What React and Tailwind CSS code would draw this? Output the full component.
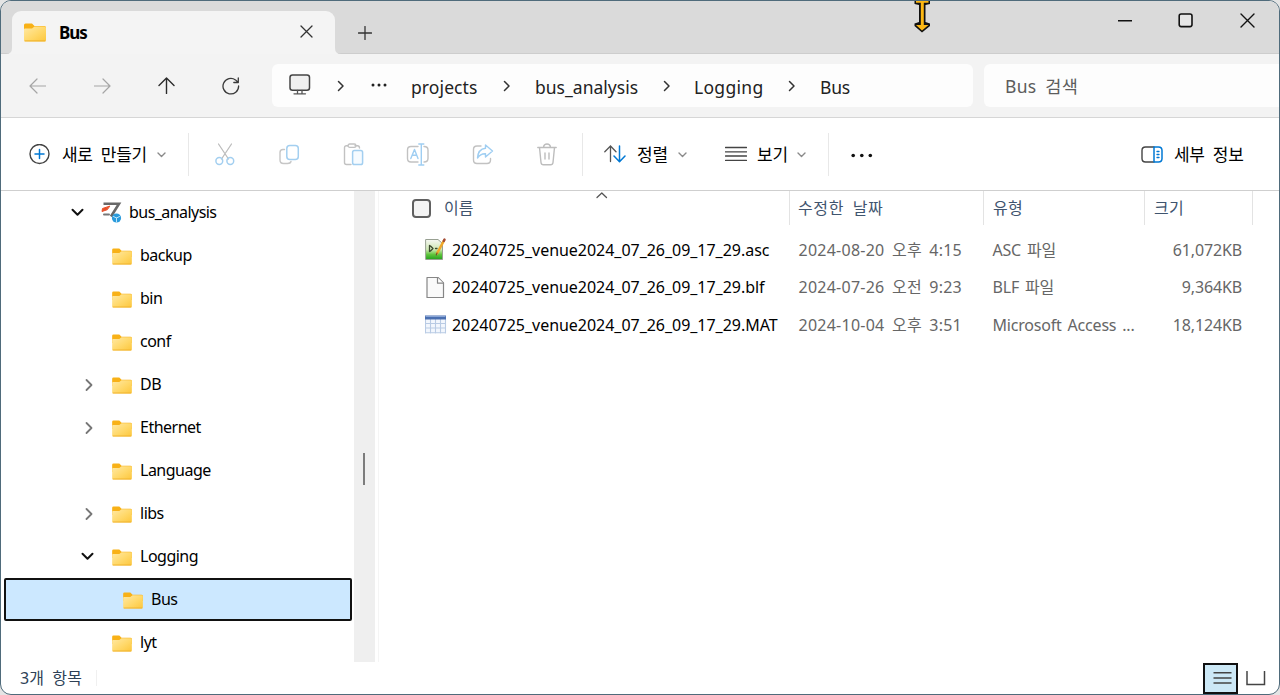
import React from 'react';
import clsx from 'clsx';

const treeItems = [
  { name: 'backup', level: 1 },
  { name: 'bin', level: 1 },
  { name: 'conf', level: 1 },
  { name: 'DB', level: 1, state: 'closed' },
  { name: 'Ethernet', level: 1, state: 'closed' },
  { name: 'Language', level: 1 },
  { name: 'libs', level: 1, state: 'closed' },
  { name: 'Logging', level: 1, state: 'open' },
  { name: 'Bus', level: 2, selected: true },
  { name: 'lyt', level: 1 },
];

const files = [
  { icon: 'asc', name: '20240725_venue2024_07_26_09_17_29.asc', date: '2024-08-20 오후 4:15', type: 'ASC 파일', size: '61,072KB' },
  { icon: 'blf', name: '20240725_venue2024_07_26_09_17_29.blf', date: '2024-07-26 오전 9:23', type: 'BLF 파일', size: '9,364KB' },
  { icon: 'mat', name: '20240725_venue2024_07_26_09_17_29.MAT', date: '2024-10-04 오후 3:51', type: 'Microsoft Access ...', size: '18,124KB' },
];

const Svg = ({ w, h, className, children }) => (
  <svg
    width={w}
    height={h}
    viewBox={`0 0 ${w} ${h}`}
    fill="none"
    strokeLinecap="round"
    strokeLinejoin="round"
    className={clsx('shrink-0', className)}
  >
    {children}
  </svg>
);

const FolderIcon = ({ className }) => (
  <svg viewBox="0 0 22 19" className={clsx('shrink-0', className)}>
    <defs>
      <linearGradient id="folderFront" x1="0" y1="0" x2="1" y2="1">
        <stop offset="0" stopColor="#ffe9a6" />
        <stop offset="0.55" stopColor="#ffd869" />
        <stop offset="1" stopColor="#fcc63c" />
      </linearGradient>
    </defs>
    <path d="M0 2Q0 0.5 1.5 0.5H8L10.5 3H20.5Q22 3 22 4.5V10H0Z" fill="#f8b117" />
    <path d="M0 6.5Q0 5.5 1 5.5H8L10.5 3.5H20.5Q22 3.5 22 5V17Q22 18.5 20.5 18.5H1.5Q0 18.5 0 17Z" fill="url(#folderFront)" />
    <path d="M0.6 17.9H21.4" stroke="#efb02a" strokeWidth="1" />
  </svg>
);

const Chevron = ({ className }) => (
  <Svg w={8} h={12} className={className}>
    <path d="M1.5 1.5L6 6L1.5 10.5" stroke="#333" strokeWidth="1.5" />
  </Svg>
);

const SmallDown = ({ className }) => (
  <Svg w={9} h={6} className={className}>
    <path d="M1 1L4.5 4.5L8 1" stroke="#8a8a8a" strokeWidth="1.4" />
  </Svg>
);

const TitleBar = () => (
  <div className="relative flex h-[53px] shrink-0 border-b border-[#cdcdcd] bg-[#dadada] pl-[11px]">
    <div className="relative z-10 mt-2.5 flex h-[43px] w-[323px] items-center rounded-t-[9px] bg-[#f4f4f4] pl-3">
      <Svg w={6} h={6} className="absolute -left-1.5 bottom-0">
        <path d="M6 0V6H0Q6 6 6 0Z" fill="#f4f4f4" />
      </Svg>
      <Svg w={6} h={6} className="absolute -right-1.5 bottom-0">
        <path d="M0 0V6H6Q0 6 0 0Z" fill="#f4f4f4" />
      </Svg>
      <FolderIcon className="-mt-px h-[19px] w-[22px]" />
      <span className="ml-[13px] text-[17px] font-bold tracking-[-1px] text-black">Bus</span>
      <Svg w={13} h={13} className="mr-[22px] -mt-0.5 ml-auto">
        <path d="M1 1L12 12M12 1L1 12" stroke="#333" strokeWidth="1.3" />
      </Svg>
    </div>
    <Svg w={14} h={14} className="mt-[25px] ml-[23px]">
      <path d="M7 0.5V13.5M0.5 7H13.5" stroke="#333" strokeWidth="1.3" />
    </Svg>
    <div className="mt-3 mr-[24px] ml-auto flex items-start">
      <Svg w={14} h={15}>
        <path d="M0.5 7.7H13.5" stroke="#111" strokeWidth="1.6" />
      </Svg>
      <Svg w={15} h={15} className="ml-[46px]">
        <rect x="1.2" y="1" width="12.8" height="12.6" rx="2" fill="#e6e6e6" stroke="#111" strokeWidth="1.6" />
      </Svg>
      <Svg w={15} h={15} className="ml-[47px]">
        <path d="M1 1L14 14M14 1L1 14" stroke="#111" strokeWidth="1.4" />
      </Svg>
    </div>
    <Svg w={18} h={34} className="absolute -top-px left-[912px]">
      <path d="M1.5 0V4L6 5V22L1.5 23.5V26L9 32.5L17 26V23.5L12.5 22V5L17 4V0Z" fill="#111" />
      <path d="M3 0V2.8H7.8V25H3L9 30.5L15.5 25H10.8V2.8H15.5V0Z" fill="#fdb813" />
    </Svg>
  </div>
);

const Crumb = ({ children, className }) => (
  <span className={clsx('pt-[3px] text-[17.5px] text-[#222]', className)}>{children}</span>
);

const AddressBar = () => (
  <div className="flex h-[64px] shrink-0 items-center border-b border-[#d6d6d6] bg-[#f3f3f3]">
    <Svg w={17} h={16} className="ml-7">
      <path d="M16.5 8H1M8 1L1 8L8 15" stroke="#a5a5a5" strokeWidth="1.2" />
    </Svg>
    <Svg w={17} h={16} className="ml-[48px]">
      <path d="M0.5 8H16M9 1L16 8L9 15" stroke="#a5a5a5" strokeWidth="1.2" />
    </Svg>
    <Svg w={17} h={17} className="ml-[47px]">
      <path d="M8.5 16.5V1M1 8.5L8.5 1L16 8.5" stroke="#2b2b2b" strokeWidth="1.4" />
    </Svg>
    <Svg w={18} h={18} className="ml-[47px]">
      <path d="M16.6 9A7.8 7.8 0 1 1 13.5 2.9L16 5.3M16.3 1V5.5H11.8" stroke="#3a3a3a" strokeWidth="1.3" />
    </Svg>
    <div className="ml-[32px] flex h-[43px] w-[701px] items-center rounded-[6px] bg-[#fdfdfd]">
      <Svg w={22} h={21} className="ml-[17px] -mt-0.5">
        <rect x="1" y="1" width="19.5" height="15.2" rx="2.5" fill="#f0f0f0" stroke="#444" strokeWidth="1.5" />
        <path d="M8.5 16.5V19M13 16.5V19M5 19.8H16.5" stroke="#555" strokeWidth="1.3" />
      </Svg>
      <Chevron className="ml-[26px]" />
      <Svg w={17} h={4} className="ml-[26px] -mt-0.5">
        <circle cx="2" cy="2" r="1.5" fill="#222" />
        <circle cx="8" cy="2" r="1.5" fill="#222" />
        <circle cx="14" cy="2" r="1.5" fill="#222" />
      </Svg>
      <Crumb className="ml-[23px] w-[68px] tracking-[0.1px]">projects</Crumb>
      <Chevron className="ml-[24px]" />
      <Crumb className="ml-[24px] w-[104px] tracking-[0.02px]">bus_analysis</Crumb>
      <Chevron className="ml-[24px]" />
      <Crumb className="ml-[23px] w-[70px] tracking-[0.3px]">Logging</Crumb>
      <Chevron className="ml-[24px]" />
      <Crumb className="ml-[24px] tracking-[-0.2px]">Bus</Crumb>
    </div>
    <div className="ml-[11px] flex h-[43px] grow items-center rounded-l-[6px] bg-[#fdfdfd] pt-0.5 pl-[21px] text-[17.5px] [word-spacing:4px] text-[#5c5c5c]">
      <span className="tracking-[0.3px]">Bus 검색</span>
    </div>
  </div>
);

const Divider = ({ className }) => <div className={clsx('h-[43px] w-px bg-[#e8e8e8]', className)} />;

const Toolbar = () => (
  <div className="flex h-[73px] shrink-0 items-center border-b border-[#cfcfcf] bg-white text-[17px] [word-spacing:4px] text-black">
    <Svg w={21} h={21} className="ml-7">
      <circle cx="10.5" cy="10" r="9.5" stroke="#444" strokeWidth="1.4" />
      <path d="M10.5 5.5V14.5M6 10H15" stroke="#0078d4" strokeWidth="1.5" />
    </Svg>
    <span className="ml-[12px] w-[86px] pt-px whitespace-nowrap tracking-[-0.3px]">새로 만들기</span>
    <SmallDown className="mt-px ml-[9px]" />
    <Divider className="ml-[22px]" />
    <Svg w={20} h={23} className="ml-[26px]">
      <path d="M3.5 1L13.5 16M16.5 1L6.5 16" stroke="#bdbdbd" strokeWidth="1.3" />
      <circle cx="4.3" cy="18" r="3.4" stroke="#a3cff0" strokeWidth="1.5" />
      <circle cx="15.3" cy="18" r="3.4" stroke="#a3cff0" strokeWidth="1.5" />
    </Svg>
    <Svg w={21} h={21} className="ml-[44px]">
      <path d="M5.5 5.5H4Q1 5.5 1 8.5V16Q1 19.5 4.5 19.5H8.5Q11.5 19.5 12 17.5" stroke="#c6c6c6" strokeWidth="1.4" />
      <rect x="7.8" y="1.6" width="11.5" height="14" rx="3" stroke="#a3cff0" strokeWidth="1.5" />
    </Svg>
    <Svg w={21} h={23} className="ml-[43px]">
      <path d="M5 2.8H3.5Q1.5 2.8 1.5 4.8V19.5Q1.5 21.5 3.5 21.5H8M12 2.8H14.5Q16.5 2.8 16.5 5" stroke="#c2c2c2" strokeWidth="1.4" />
      <rect x="5" y="1" width="8" height="3.4" rx="1.7" stroke="#c2c2c2" strokeWidth="1.3" />
      <rect x="9.6" y="7.6" width="10" height="14" rx="1.8" fill="#f6fbff" stroke="#a3cff0" strokeWidth="1.5" />
    </Svg>
    <Svg w={24} h={23} className="ml-[42px]">
      <path d="M12 3.5H5Q1.5 3.5 1.5 7V15.5Q1.5 19 5 19H12M18 3.5Q22 3.5 22 7V15.5Q22 19 18 19" stroke="#c2c2c2" strokeWidth="1.4" />
      <path d="M4.8 15.5L8.5 6.5L12 15.5M6.2 12.3H10.8M15.3 1.5V21.5M12.8 1H17.8M12.8 22H17.8" stroke="#9fcef2" strokeWidth="1.4" />
    </Svg>
    <Svg w={22} h={22} className="ml-[42px]">
      <path d="M9 3H5Q1.5 3 1.5 6.5V17Q1.5 20.5 5 20.5H15Q18.5 20.5 18.5 17V15.5" stroke="#c2c2c2" strokeWidth="1.4" />
      <path d="M13.5 2L20.5 8L13.5 14V10.8Q8.5 10.5 5.5 15Q6 6 13.5 5.2Z" stroke="#9fcef2" strokeWidth="1.4" />
    </Svg>
    <Svg w={20} h={23} className="ml-[43px]">
      <path d="M0.8 4.5H19.2M6.5 4Q7 1 10 1T13.5 4M2.5 4.5L4 19.5Q4.2 21.8 6.5 21.8H13.5Q15.8 21.8 16 19.5L17.5 4.5M8 10V16M12 10V16" stroke="#bdbdbd" strokeWidth="1.4" />
    </Svg>
    <Divider className="ml-[25px]" />
    <Svg w={22} h={18} className="ml-[21px]">
      <path d="M6.5 16.5V1M0.8 6.8L6.5 1L12 6.8" stroke="#555" strokeWidth="1.3" />
      <path d="M15.5 1V16.5M10 11L15.5 16.8L21 11" stroke="#0078d4" strokeWidth="1.5" />
    </Svg>
    <span className="ml-[11px] w-[33px] pt-px whitespace-nowrap tracking-[-0.2px]">정렬</span>
    <SmallDown className="mt-px ml-2" />
    <Svg w={22} h={16} className="ml-[38px]">
      <path d="M0.5 1.5H21.5M0.5 5.8H21.5M0.5 10H21.5M0.5 14.4H21.5" stroke="#444" strokeWidth="1.3" />
    </Svg>
    <span className="ml-[10px] w-[33px] pt-px whitespace-nowrap tracking-[-0.2px]">보기</span>
    <SmallDown className="mt-px ml-[7px]" />
    <Divider className="ml-[22px]" />
    <Svg w={22} h={5} className="mt-0.5 ml-[22px]">
      <circle cx="2.2" cy="2.5" r="1.8" fill="#111" />
      <circle cx="10.8" cy="2.5" r="1.8" fill="#111" />
      <circle cx="19.3" cy="2.5" r="1.8" fill="#111" />
    </Svg>
    <Svg w={22} h={17} className="ml-auto">
      <path d="M13 1H4.5Q1 1 1 4.5V12.5Q1 16 4.5 16H13" stroke="#444" strokeWidth="1.4" />
      <path d="M13 1H17.5Q21 1 21 4.5V12.5Q21 16 17.5 16H13Z" stroke="#0078d4" strokeWidth="1.5" />
      <path d="M16 5.5H18M16 8.5H18M16 11.5H18" stroke="#0078d4" strokeWidth="1.3" />
    </Svg>
    <span className="mr-[34px] ml-[11px] w-[71px] pt-px whitespace-nowrap tracking-[-0.3px]">세부 정보</span>
  </div>
);

const TreeRow = ({ name, level, state, selected }) => (
  <div
    className={clsx(
      'mr-0.5 ml-[3px] flex h-[43px] shrink-0 items-center rounded-[2px]',
      selected && 'border-2 border-[#111] bg-[#cce8ff]'
    )}
  >
    <div
      className={clsx(
        'flex shrink-0 justify-end',
        level === 1 && 'w-[108px] pr-[18px]',
        level === 2 && 'w-[117px]'
      )}
    >
      {state === 'closed' && (
        <Svg w={10} h={14} className="mt-px">
          <path d="M2.5 2L7.5 7L2.5 12" stroke="#777" strokeWidth="1.8" />
        </Svg>
      )}
      {state === 'open' && (
        <Svg w={13} h={9}>
          <path d="M1.5 1.8L6.5 6.8L11.5 1.8" stroke="#111" strokeWidth="2" />
        </Svg>
      )}
    </div>
    <FolderIcon className="mt-px h-[17px] w-5" />
    <span className="mb-px ml-2 text-[16px] tracking-[-0.5px] text-black">{name}</span>
  </div>
);

const Sidebar = () => (
  <div className="flex w-[378px] shrink-0 border-r border-[#f5f5f5]">
    <div className="flex w-[353px] flex-col overflow-hidden">
      <div className="flex h-[43px] shrink-0 items-center">
        <Svg w={13} h={9} className="ml-[70px]">
          <path d="M1.5 1.8L6.5 6.8L11.5 1.8" stroke="#111" strokeWidth="2" />
        </Svg>
        <Svg w={22} h={22} className="mt-px ml-[17px]">
          <path d="M2.5 1.8H18L10 14.5" stroke="#686868" strokeWidth="2.6" strokeLinecap="butt" strokeLinejoin="miter" />
          <path d="M3 12.5H8" stroke="#777" strokeWidth="2" />
          <path d="M8.5 4.2L1.5 6.5L1 9.5L6 7.8Z" fill="#e8512b" stroke="#e8512b" strokeWidth="1" />
          <circle cx="15.5" cy="16" r="4.6" fill="#2a9bdc" />
          <path d="M12.5 14.5L15.5 16L18.5 14.5M15.5 16V20" stroke="#bfe6fa" strokeWidth="1" />
        </Svg>
        <span className="mb-px ml-1.5 text-[16px] tracking-[-0.55px] text-black">bus_analysis</span>
      </div>
      {treeItems.map((item) => (
        <TreeRow key={item.name} {...item} />
      ))}
    </div>
    <div className="flex w-[21px] justify-center bg-[#efefef]">
      <div className="mt-[262px] mr-px h-[32px] w-0.5 bg-[#7c7c7c]" />
    </div>
  </div>
);

const FileIcon = ({ type }) => {
  if (type === 'asc') {
    return (
      <Svg w={22} h={23}>
        <defs>
          <linearGradient id="ascFill" x1="0" y1="0" x2="0" y2="1">
            <stop offset="0" stopColor="#f6f7f3" />
            <stop offset="0.5" stopColor="#cfe8b4" />
            <stop offset="0.75" stopColor="#5fc53c" />
            <stop offset="1" stopColor="#23a01c" />
          </linearGradient>
        </defs>
        <path d="M1 1.5H13L17.5 5.5V21.5H1Z" fill="url(#ascFill)" stroke="#98a092" strokeWidth="1" />
        <path d="M4.5 7.5V13.5M5.5 8L8 10.5L5.5 13M10.5 10.5H12" stroke="#3c4a2e" strokeWidth="1.3" />
        <path d="M19 2.5L12 15.5" stroke="#f0a72a" strokeWidth="2.6" />
        <path d="M19.5 1.5L18.8 3" stroke="#a34b36" strokeWidth="2.4" />
        <path d="M12 15L11.3 17" stroke="#6b5130" strokeWidth="1.2" />
      </Svg>
    );
  }
  if (type === 'blf') {
    return (
      <Svg w={22} h={23}>
        <path d="M2 1.5H13L18.5 7V21.5H2Z" fill="#fafafa" stroke="#868686" strokeWidth="1.2" />
        <path d="M12.5 1.5V7.2H18.5" fill="#fff" stroke="#868686" strokeWidth="1.2" />
      </Svg>
    );
  }
  return (
    <Svg w={22} h={19}>
      <rect x="0.5" y="1" width="20" height="17" fill="#f3f7fd" />
      <path d="M0.5 8.5H20.5M0.5 13H20.5M0.5 17.8H20.5M0.5 4V18M5.5 4V18M10.5 4V18M15.5 4V18M20.5 4V18" stroke="#b9cbe4" strokeWidth="1.1" />
      <rect x="0" y="0.5" width="21" height="4" fill="#4a6fb0" />
      <path d="M1 1.5H20" stroke="#8aa6d6" strokeWidth="1" />
    </Svg>
  );
};

const headCell = 'flex h-[34px] items-center border-r border-[#e3e3e3]';

const FileList = () => (
  <div className="flex grow flex-col">
    <div className="relative flex text-[16px] [word-spacing:4px] text-[#3f546e]">
      <div className={clsx(headCell, 'w-[411px] pl-[33px]')}>
        <div className="h-[19px] w-[19px] rounded-[4px] border-2 border-[#606060] bg-[#f4f4f4]" />
        <span className="ml-[13px]">이름</span>
      </div>
      <div className={clsx(headCell, 'w-[194px] pl-2 tracking-[0.6px]')}>수정한 날짜</div>
      <div className={clsx(headCell, 'w-[161px] pl-[9px] tracking-[0.3px]')}>유형</div>
      <div className={clsx(headCell, 'w-[108px] pl-[9px] tracking-[0.3px]')}>크기</div>
      <Svg w={12} h={7} className="absolute top-px left-[217px]">
        <path d="M1 5.5L5.8 1L10.5 5.5" stroke="#555" strokeWidth="1.3" />
      </Svg>
    </div>
    <div className="mt-[6px] flex flex-col">
      {files.map((file) => (
        <div key={file.name} className="flex h-[37.5px] items-center text-[16px] whitespace-nowrap text-[#666]">
          <div className="flex w-[419.5px] shrink-0 items-center pl-[46px]">
            <FileIcon type={file.icon} />
            <span className="ml-[5px] tracking-[-0.03px] text-black">{file.name}</span>
          </div>
          <div className="w-[194px] shrink-0 tracking-[0.25px] [word-spacing:3px]">{file.date}</div>
          <div className="w-[149.5px] shrink-0 tracking-[-0.2px] [word-spacing:2px]">{file.type}</div>
          <div className="w-[100px] shrink-0 text-right tracking-[-0.15px]">{file.size}</div>
        </div>
      ))}
    </div>
  </div>
);

const StatusBar = () => (
  <div className="flex h-[32px] shrink-0 items-center text-[16px] text-[#2e4156]">
    <span className="ml-[19px] w-[77px] border-r border-[#f0f0f0] leading-[16px] tracking-[0.1px] whitespace-nowrap [word-spacing:4px]">3개 항목</span>
    <div className="ml-auto flex h-[31px] w-[35px] items-center justify-center border-2 border-[#111] bg-[#cce8f6] pl-[3px]">
      <Svg w={19} h={14}>
        <path d="M0.5 1.8H18.5M0.5 7H18.5M0.5 12H18.5" stroke="#444" strokeWidth="1.5" strokeLinecap="butt" />
      </Svg>
    </div>
    <Svg w={20} h={15} className="mr-[13px] ml-2">
      <path d="M1 0.5V13.5H18.5V0.5" stroke="#444" strokeWidth="1.5" strokeLinejoin="miter" />
    </Svg>
  </div>
);

const App = () => (
  <div className="h-[695px] w-[1280px] bg-[#e4e4e4] font-['Noto_Sans','Noto_Sans_CJK_KR',sans-serif]">
    <div className="flex h-full w-full flex-col overflow-hidden rounded-[11px] border border-[#4f6b7b] bg-white">
      <TitleBar />
      <AddressBar />
      <Toolbar />
      <div className="flex min-h-0 grow overflow-hidden">
        <Sidebar />
        <FileList />
      </div>
      <StatusBar />
    </div>
  </div>
);

export default App;
